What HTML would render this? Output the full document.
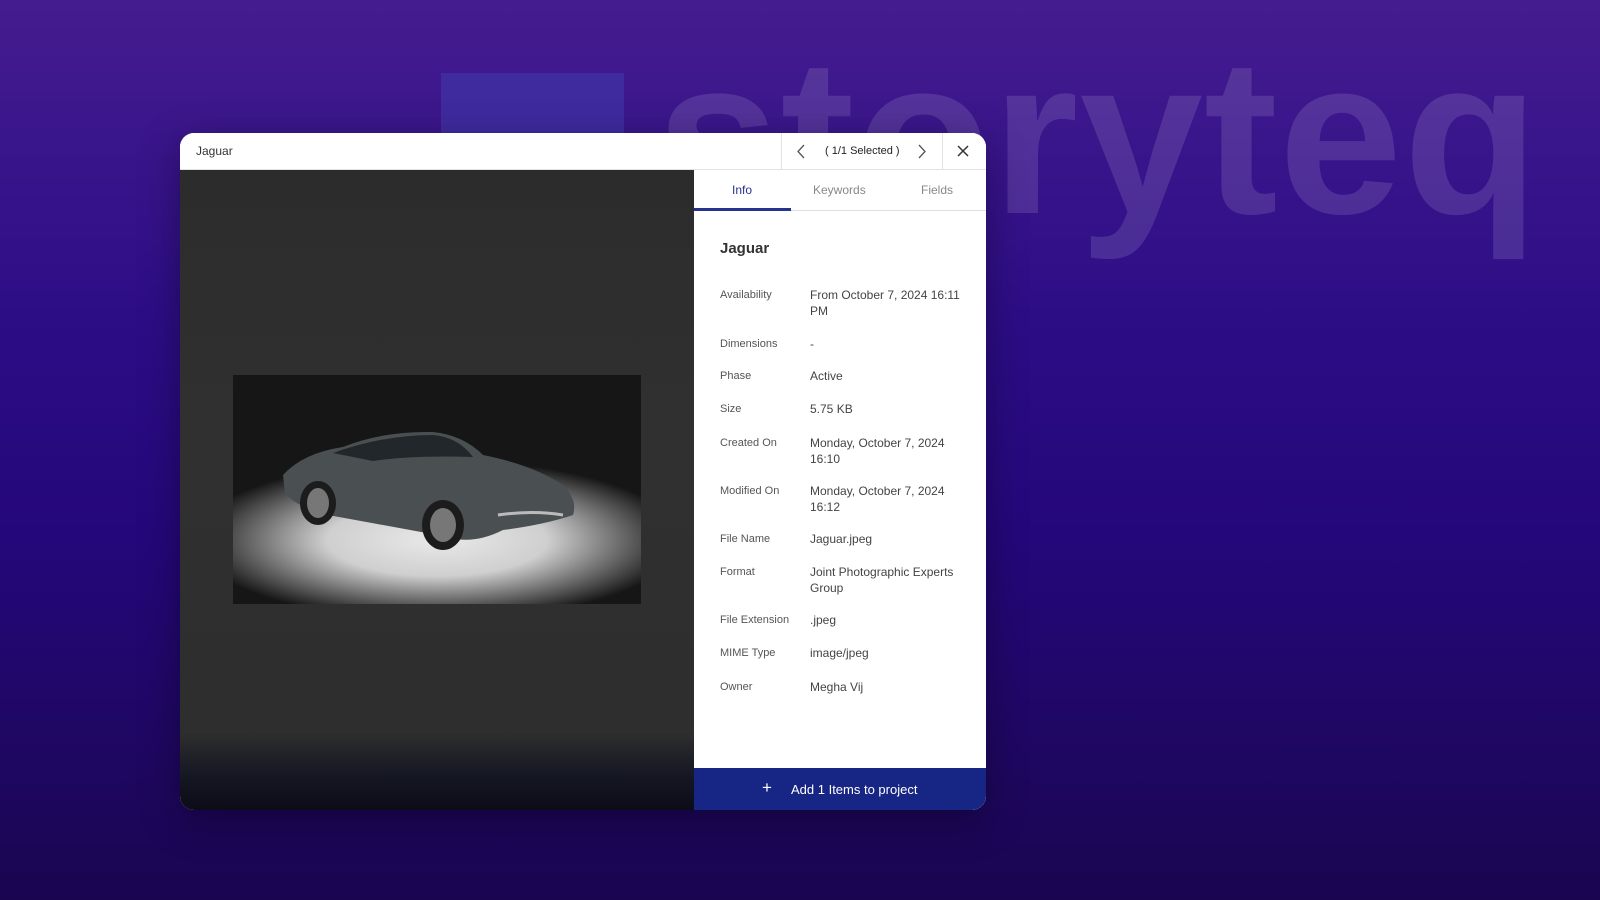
<!DOCTYPE html>
<html><head><meta charset="utf-8"><style>
*{margin:0;padding:0;box-sizing:border-box}
body{width:1600px;height:900px;overflow:hidden;position:relative;font-family:"Liberation Sans",sans-serif;
background:linear-gradient(180deg,#441c8f 0%,#2d0d86 35%,#24077a 60%,#1e0760 85%,#190550 100%);}
.sq{position:absolute;left:441px;top:73px;width:183px;height:80px;background:#3f2a9e;}
.logo{position:absolute;left:656px;top:26px;font-size:222px;font-weight:bold;color:rgba(255,255,255,0.12);letter-spacing:1px;line-height:1}
.modal{position:absolute;left:180px;top:133px;width:806px;height:677px;border-radius:14px;overflow:hidden;background:#fff;box-shadow:0 10px 40px rgba(0,0,0,.35)}
.hdr{position:absolute;left:0;top:0;width:806px;height:37px;background:#fff;border-bottom:1px solid #e2e2e2}
.hdr .t{position:absolute;left:16px;top:11px;font-size:12px;color:#333}
.nav{position:absolute;left:601px;top:0;width:162px;height:37px;border-left:1px solid #e2e2e2;border-right:1px solid #e2e2e2}
.nav .s{position:absolute;left:43px;top:12px;font-size:11px;color:#222}
.close{position:absolute;left:775px;top:10px}
.img{position:absolute;left:0;top:37px;width:514px;height:640px;background:linear-gradient(180deg,#2c2c2c 0%,#303030 40%,#2e2e2e 88%,#141622 95%,#0b0c18 100%)}
.car{position:absolute;left:53px;top:205px;width:408px;height:229px;background:radial-gradient(ellipse 60% 35% at 50% 72%,#e9e9e9 0%,#cfcfcf 45%,#4a4a4a 85%,#161616 100%);overflow:hidden}
.side{position:absolute;left:514px;top:37px;width:292px;height:640px;background:#fff}
.tabs{position:absolute;left:0;top:0;width:292px;height:41px;border-bottom:1px solid #ddd}
.tab{position:absolute;top:13px;font-size:12px;color:#888}
.ul{position:absolute;left:0;top:38px;width:97px;height:3px;background:#26348f}
h2{position:absolute;left:26px;top:70px;font-size:15px;color:#333;font-weight:bold}
.r{position:absolute;left:26px;font-size:11px;color:#555;width:260px;padding-top:1px}
.r b{position:absolute;left:90px;top:-1px;font-weight:normal;font-size:12px;color:#444;line-height:16px;width:160px}
.foot{position:absolute;left:0;top:598px;width:292px;height:42px;background:#172585;color:#fff;font-size:13px}
</style></head><body>
<div class="sq"></div>
<div class="logo">storyteq</div>
<div class="modal">
 <div class="hdr"><div class="t">Jaguar</div>
  <div class="nav">
   <svg style="position:absolute;left:14px;top:11px" width="10" height="15" viewBox="0 0 10 15"><path d="M8 1L2 7.5L8 14" fill="none" stroke="#555" stroke-width="1.3"/></svg>
   <div class="s">( 1/1 Selected )</div>
   <svg style="position:absolute;left:135px;top:11px" width="10" height="15" viewBox="0 0 10 15"><path d="M2 1L8 7.5L2 14" fill="none" stroke="#555" stroke-width="1.3"/></svg>
  </div>
  <svg class="close" width="16" height="16" viewBox="0 0 16 16"><path d="M3 3L13 13M13 3L3 13" stroke="#333" stroke-width="1.5"/></svg>
 </div>
 <div class="img">
  <div class="car">
   <svg width="408" height="229" viewBox="0 0 408 229">
    <path d="M50 100 Q70 78 110 72 Q150 56 200 57 Q230 60 250 80 Q300 90 330 110 Q345 125 340 140 Q310 150 270 155 Q240 170 215 162 Q150 150 95 140 Q60 130 52 118Z" fill="#4a4f52"/>
    <path d="M100 78 Q150 60 200 60 Q225 62 240 82 Q180 80 140 86Z" fill="#22272b"/>
    <ellipse cx="85" cy="128" rx="18" ry="22" fill="#1c1c1c"/><ellipse cx="85" cy="128" rx="11" ry="15" fill="#777"/>
    <ellipse cx="210" cy="150" rx="21" ry="25" fill="#1c1c1c"/><ellipse cx="210" cy="150" rx="13" ry="17" fill="#777"/>
    <path d="M265 140 Q300 135 330 140" stroke="#bbb" stroke-width="3" fill="none"/>
   </svg>
  </div>
 </div>
 <div class="side">
  <div class="tabs"><div class="tab" style="left:38px;color:#26348f">Info</div><div class="tab" style="left:119px">Keywords</div><div class="tab" style="left:227px">Fields</div><div class="ul"></div></div>
  <h2>Jaguar</h2>
  <div class="r" style="top:118px">Availability<b>From October 7, 2024 16:11 PM</b></div>
  <div class="r" style="top:167px">Dimensions<b>-</b></div>
  <div class="r" style="top:199px">Phase<b>Active</b></div>
  <div class="r" style="top:232px">Size<b>5.75 KB</b></div>
  <div class="r" style="top:266px">Created On<b>Monday, October 7, 2024 16:10</b></div>
  <div class="r" style="top:314px">Modified On<b>Monday, October 7, 2024 16:12</b></div>
  <div class="r" style="top:362px">File Name<b>Jaguar.jpeg</b></div>
  <div class="r" style="top:395px">Format<b>Joint Photographic Experts Group</b></div>
  <div class="r" style="top:443px">File Extension<b>.jpeg</b></div>
  <div class="r" style="top:476px">MIME Type<b>image/jpeg</b></div>
  <div class="r" style="top:510px">Owner<b>Megha Vij</b></div>
  <div class="foot"><span style="position:absolute;left:68px;top:10px;font-size:17px">+</span><span style="position:absolute;left:97px;top:14px">Add 1 Items to project</span></div>
 </div>
</div>
</body></html>
